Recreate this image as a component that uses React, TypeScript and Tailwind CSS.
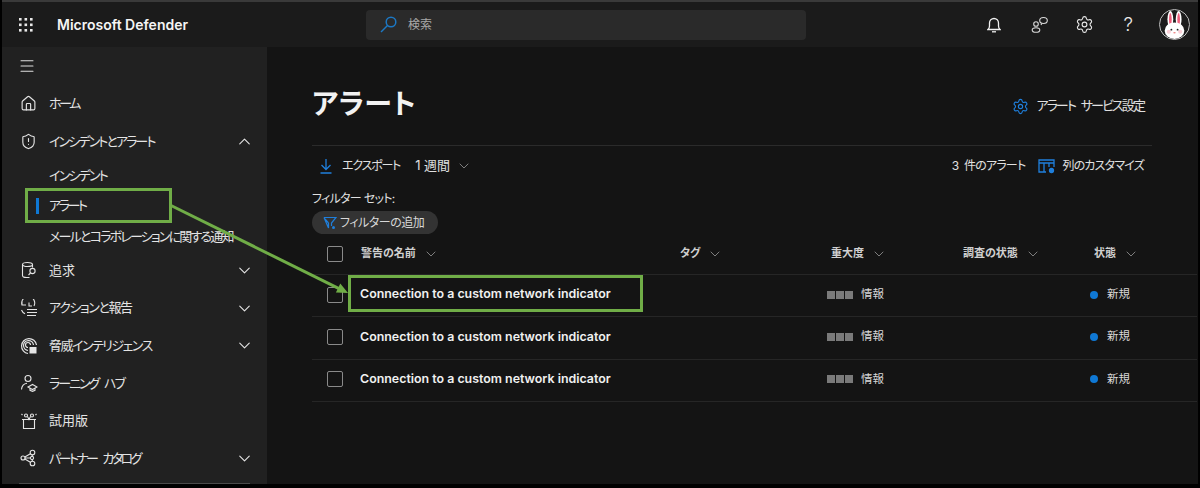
import { ChevronDown, ChevronUp, Home, Menu, Settings, ShieldAlert } from 'lucide-react';
import type { ReactNode } from 'react';

const font = "font-['Inter','Noto_Sans_CJK_JP',sans-serif] [font-feature-settings:'palt']";

const Grid = () => (
  <svg width="16" height="16" viewBox="0 0 16 16" fill="#e8e8e8">
    {[1, 6.5, 12].flatMap((y) =>
      [1, 6.5, 12].map((x) => <rect key={`${x}-${y}`} x={x} y={y} width="2.6" height="2.6" />),
    )}
  </svg>
);

const SearchIcon = () => (
  <svg width="17" height="17" viewBox="0 0 17 17" fill="none" stroke="#1c78c4" strokeWidth="1.5">
    <circle cx="11" cy="6" r="4.800" />
    <path d="M7.500 9.500L1 16" />
  </svg>
);

const BellIcon = () => (
  <svg width="14" height="16" viewBox="0 0 14 16" fill="none" stroke="#f0f0f0" strokeWidth="1.3">
    <path d="M1 12.500h12c-1-1-1.500-2-1.500-3.500V6a4.500 4.500 0 0 0-9 0v3c0 1.500-.5 2.500-1.500 3.500z" />
    <path d="M5 14.800h4" />
  </svg>
);

const HuntIcon = () => (
  <svg width="18" height="18" viewBox="0 0 18 18" fill="none" stroke="#e4e4e4" strokeWidth="1.1">
    <ellipse cx="7.500" cy="3.500" rx="5" ry="2" />
    <path d="M2.500 3.500v11c0 1.500 2 2 4 2h3M12.500 3.500v3" />
    <circle cx="12.500" cy="10" r="2.600" />
    <path d="M10.500 12l-2 2" />
  </svg>
);

const ActionIcon = () => (
  <svg width="18" height="18" viewBox="0 0 18 18" fill="none" stroke="#e4e4e4" strokeWidth="1.1">
    <path d="M2 6a6.500 6.500 0 1 1 12 1M2 2v4h4M9 3.500V7h3M1.500 11c.7 1.800 2 3 3.500 3.800" />
    <path d="M7 10.500h10M7 13.500h10M7 16.500h9" />
  </svg>
);

const IntelIcon = () => (
  <svg width="18" height="18" viewBox="0 0 18 18" fill="none" stroke="#e4e4e4" strokeWidth="1.200">
    <path d="M8 16.500A7.500 7.500 0 1 1 16.500 8" />
    <path d="M8 13.500A5 5 0 1 1 13.500 8" />
    <path d="M8 10.500A2.500 2.500 0 1 1 10.500 8" />
    <rect x="9.500" y="10" width="7" height="6.500" fill="#e4e4e4" stroke="none" />
  </svg>
);

const LearnIcon = () => (
  <svg width="18" height="18" viewBox="0 0 18 18" fill="none" stroke="#e4e4e4" strokeWidth="1.1">
    <circle cx="8" cy="4.500" r="3" />
    <path d="M1.500 15.500c.3-3.500 2.500-6 5.500-6.300" />
    <path d="M8 13l4.500-2.500L17 13l-4.500 2.500zM10 14.500v1.800l2.500 1 2.500-1v-1.800" />
  </svg>
);

const TrialIcon = () => (
  <svg width="18" height="18" viewBox="0 0 18 18" fill="none" stroke="#e4e4e4" strokeWidth="1.1">
    <path d="M2 7.500h14M3.500 7.500v9h11v-9" />
    <circle cx="6" cy="3.500" r="1.500" />
    <circle cx="12" cy="3.500" r="1.500" />
    <path d="M7.500 4.500L9 7.500l1.500-3M1.500 2l1 1M16.500 2l-1 1" />
  </svg>
);

const PartnerIcon = () => (
  <svg width="18" height="18" viewBox="0 0 18 18" fill="none" stroke="#e4e4e4" strokeWidth="1.1">
    <circle cx="3" cy="9" r="2" />
    <circle cx="12.500" cy="3.500" r="2.300" />
    <circle cx="12.500" cy="14.500" r="2.300" />
    <circle cx="12" cy="9" r="1.600" />
    <path d="M5 9h5.400M4.800 8l6-3.400M4.800 10l6 3.400M12.300 5.800v1.600M12.300 10.600v1.600" />
  </svg>
);

const PeopleChat = () => (
  <svg width="18" height="18" viewBox="0 0 18 18" fill="none" stroke="#d8d8d8" strokeWidth="1.1">
    <circle cx="5" cy="8" r="2.300" />
    <ellipse cx="5" cy="14" rx="3.800" ry="2.300" />
    <ellipse cx="12.500" cy="4.500" rx="3.800" ry="3" />
    <path d="M11 7.300l-1 1.700" />
  </svg>
);

const ExportIcon = () => (
  <svg width="12" height="16" viewBox="0 0 12 16" fill="none" stroke="#1f7fdc" strokeWidth="1.3">
    <path d="M6 1v10M1.500 7L6 11.500 10.500 7M.5 15h11" />
  </svg>
);

const FilterIcon = () => (
  <svg width="14" height="14" viewBox="0 0 14 14" fill="none" stroke="#1f7fdc" strokeWidth="1.200">
    <path d="M1 1.500h12L8.500 7v3M5.500 7v5L1 1.500M5.500 7L2 3" />
    <circle cx="10.500" cy="11.500" r="1.500" fill="#1f7fdc" stroke="none" />
  </svg>
);

const ColumnsIcon = () => (
  <svg width="17" height="15" viewBox="0 0 17 15" fill="none" stroke="#1f7fdc" strokeWidth="1.300">
    <path d="M8 13H1V1h15v7M1 4h15M6 4v9M11 4v4" />
    <circle cx="13.500" cy="11.500" r="2" fill="#1f7fdc" />
  </svg>
);

const Rabbit = () => (
  <div className="w-[31px] h-[31px] rounded-full bg-[#1c1c1c] border border-[#bdbdbd] overflow-hidden">
    <svg width="29" height="29" viewBox="0 0 28 28">
      <ellipse cx="10" cy="9" rx="2.800" ry="8" fill="#fff" />
      <ellipse cx="18" cy="9" rx="2.800" ry="8" fill="#fff" />
      <ellipse cx="10" cy="9" rx="1.300" ry="6" fill="#ee5f7c" />
      <ellipse cx="18" cy="9" rx="1.300" ry="6" fill="#ee5f7c" />
      <ellipse cx="14" cy="20" rx="9.500" ry="8" fill="#fff" />
      <circle cx="8.500" cy="21" r="2" fill="#fbd0d8" />
      <circle cx="19.500" cy="21" r="2" fill="#fbd0d8" />
      <circle cx="11" cy="19" r="0.900" fill="#222" />
      <circle cx="17" cy="19" r="0.900" fill="#222" />
      <ellipse cx="14" cy="22" rx="1.200" ry="0.800" fill="#e88" />
    </svg>
  </div>
);

function NavItem({ icon, label, chevron, tracking }: { icon: ReactNode; label: string; chevron?: 'up' | 'down'; tracking?: string }) {
  return (
    <div className="h-[37.6px] flex items-center pl-[18px] pr-[13px] text-[13px] text-[#e4e4e4]">
      <span className="w-[29px] flex items-center shrink-0">{icon}</span>
      <span className={`flex-1 whitespace-nowrap ${tracking ?? ''}`}>{label}</span>
      {chevron === 'up' && <ChevronUp size={19} strokeWidth={1.4} />}
      {chevron === 'down' && <ChevronDown size={19} strokeWidth={1.4} />}
    </div>
  );
}

function SubItem({ label, active, tracking }: { label: string; active?: boolean; tracking: string }) {
  return (
    <div className={`h-[30.5px] flex items-center text-[13px] text-[#e4e4e4] relative pl-[47px] whitespace-nowrap ${tracking}`}>
      {active && <span className="absolute left-[34px] top-[7px] w-[3px] h-[16px] bg-[#0f78d4]" />}
      {label}
    </div>
  );
}

function HeadCell({ label, className }: { label: string; className: string }) {
  return (
    <div className={`flex items-center gap-[7px] text-[11px] font-semibold text-[#d0d0d0] ${className}`}>
      <span>{label}</span>
      <ChevronDown size={16} strokeWidth={1.2} className="text-[#999]" />
    </div>
  );
}

function Row() {
  return (
    <div className="h-[42.4px] flex items-center border-b border-[#262626] pb-[2px]">
      <span className="ml-[15px] w-[16px] h-[16px] border border-[#8a8a8a] rounded-[2px] shrink-0" />
      <span className="ml-[17px] w-[467px] text-[12.4px] font-semibold text-[#f0f0f0] whitespace-nowrap">
        Connection to a custom network indicator
      </span>
      <span className="flex gap-[1px] w-[34px] shrink-0">
        <i className="w-[8px] h-[8px] bg-[#7a7a7a]" />
        <i className="w-[8px] h-[8px] bg-[#7a7a7a]" />
        <i className="w-[8px] h-[8px] bg-[#7a7a7a]" />
      </span>
      <span className="w-[229px] text-[11.5px] text-[#d8d8d8]">情報</span>
      <span className="w-[8px] h-[8px] rounded-full bg-[#0f78d4] shrink-0" />
      <span className="ml-[9px] text-[11.5px] text-[#d8d8d8]">新規</span>
    </div>
  );
}

export default function App() {
  return (
    <div className={`w-[1200px] h-[488px] bg-black overflow-hidden ${font}`}>
      <div className="relative h-[484px] ml-[2px] mr-[2px] border-t-2 border-[#3a3a3a] flex flex-col bg-[#141414]">
        <header className="h-[45px] bg-[#1b1b1b] flex items-center shrink-0">
          <span className="ml-[16px]"><Grid /></span>
          <span className="ml-[23px] text-[14px] font-semibold text-[#f5f5f5] w-[309px]">Microsoft Defender</span>
          <div className="w-[440px] h-[30px] rounded-[4px] bg-[#2a2a2a] flex items-center pl-[14px] gap-[11px] text-[12px] text-[#a8a8a8]">
            <SearchIcon />
            <span>検索</span>
          </div>
          <div className="ml-auto flex items-center text-[#e8e8e8] pr-[8px]">
            <BellIcon />
            <span className="ml-[30px]"><PeopleChat /></span>
            <span className="ml-[26px]"><Settings size={19} strokeWidth={1.4} /></span>
            <span className="ml-[29px] text-[19px] font-light leading-none">?</span>
            <span className="ml-[26px]"><Rabbit /></span>
          </div>
        </header>
        <div className="flex-1 flex min-h-0">
          <aside className="w-[265px] bg-[#212121] shrink-0 flex flex-col">
            <div className="h-[38px] flex items-center pl-[16px]">
              <Menu size={18} strokeWidth={1.4} className="text-[#e0e0e0]" />
            </div>
            <NavItem icon={<Home size={17} strokeWidth={1.6} />} label="ホーム" tracking="tracking-[-2.4px]" />
            <NavItem icon={<ShieldAlert size={17} strokeWidth={1.6} />} label="インシデントとアラート" chevron="up" tracking="tracking-[-1.9px]" />
            <SubItem label="インシデント" tracking="tracking-[-1.8px]" />
            <SubItem label="アラート" active tracking="tracking-[-2.4px]" />
            <SubItem label="メールとコラボレーションに関する通知" tracking="tracking-[-1.8px]" />
            <NavItem icon={<HuntIcon />} label="追求" chevron="down" />
            <NavItem icon={<ActionIcon />} label="アクションと報告" chevron="down" tracking="tracking-[-1.4px]" />
            <NavItem icon={<IntelIcon />} label="脅威インテリジェンス" chevron="down" tracking="tracking-[-1.5px]" />
            <NavItem icon={<LearnIcon />} label="ラーニング ハブ" tracking="tracking-[-2px] [word-spacing:4px]" />
            <NavItem icon={<TrialIcon />} label="試用版" />
            <NavItem icon={<PartnerIcon />} label="パートナー カタログ" chevron="down" tracking="tracking-[-2.6px] [word-spacing:5px]" />
            <div className="mt-auto mx-[17px] border-b border-[#4a4a4a]" />
          </aside>
          <main className="flex-1 pl-[45px] pr-[46px]">
            <div className="h-[99px] flex items-center justify-between border-b border-[#2b2b2b] pr-[8px] pt-[16px]">
              <h1 className="text-[28px] font-semibold text-[#f2f2f2] tracking-[0.5px]">アラート</h1>
              <div className="flex items-center gap-[7px] text-[13px] text-[#e0e0e0] mt-[4px]">
                <Settings size={17} strokeWidth={1.6} className="text-[#1f7fdc]" />
                <span className="tracking-[-1.9px] [word-spacing:4px]">アラート サービス設定</span>
              </div>
            </div>
            <div className="h-[40px] flex items-center text-[12px] text-[#e0e0e0] pr-[8px]">
              <span className="ml-[8px]"><ExportIcon /></span>
              <span className="ml-[10px] tracking-[-1.2px]">エクスポート</span>
              <span className="ml-[15px] text-[13px]">1 週間</span>
              <ChevronDown size={16} strokeWidth={1.2} className="ml-[6px] text-[#999]" />
              <span className="ml-auto tracking-[-0.8px] [word-spacing:3px]">3 件のアラート</span>
              <span className="ml-[13px]"><ColumnsIcon /></span>
              <span className="ml-[7px] tracking-[-0.8px]">列のカスタマイズ</span>
            </div>
            <div className="text-[12px] text-[#e0e0e0] leading-[18px] mt-[4px] tracking-[-0.7px]">フィルター セット:</div>
            <div className="mt-[3px] w-[126px] h-[23px] rounded-full bg-[#333] flex items-center pl-[11px] gap-[3px] text-[12px] text-[#d8d8d8]">
              <FilterIcon />
              <span className="tracking-[-0.5px]">フィルターの追加</span>
            </div>
            <div className="-mr-[45px]">
              <div className="h-[41px] flex items-center border-b border-[#262626] pb-[1px]">
                <span className="ml-[15px] w-[16px] h-[16px] border border-[#8a8a8a] rounded-[2px] shrink-0" />
                <HeadCell label="警告の名前" className="ml-[18px] w-[319px]" />
                <HeadCell label="タグ" className="w-[151px]" />
                <HeadCell label="重大度" className="w-[132px]" />
                <HeadCell label="調査の状態" className="w-[131px]" />
                <HeadCell label="状態" className="w-[60px]" />
              </div>
              <Row />
              <Row />
              <Row />
            </div>
          </main>
        </div>
        {/* annotation overlay */}
        <div className="absolute left-[23px] top-[186px] w-[147px] h-[35px] border-[3px] border-[#70ad47]" />
        <div className="absolute left-[346px] top-[273px] w-[295px] h-[37px] border-[3px] border-[#70ad47]" />
        <svg className="absolute left-0 top-0 pointer-events-none" width="1196" height="484" fill="none">
          <path d="M168 203L337 286.600" stroke="#70ad47" strokeWidth="3" />
          <path d="M346 291L333.900 290.600L338.300 281.600Z" fill="#70ad47" />
        </svg>
      </div>
    </div>
  );
}
